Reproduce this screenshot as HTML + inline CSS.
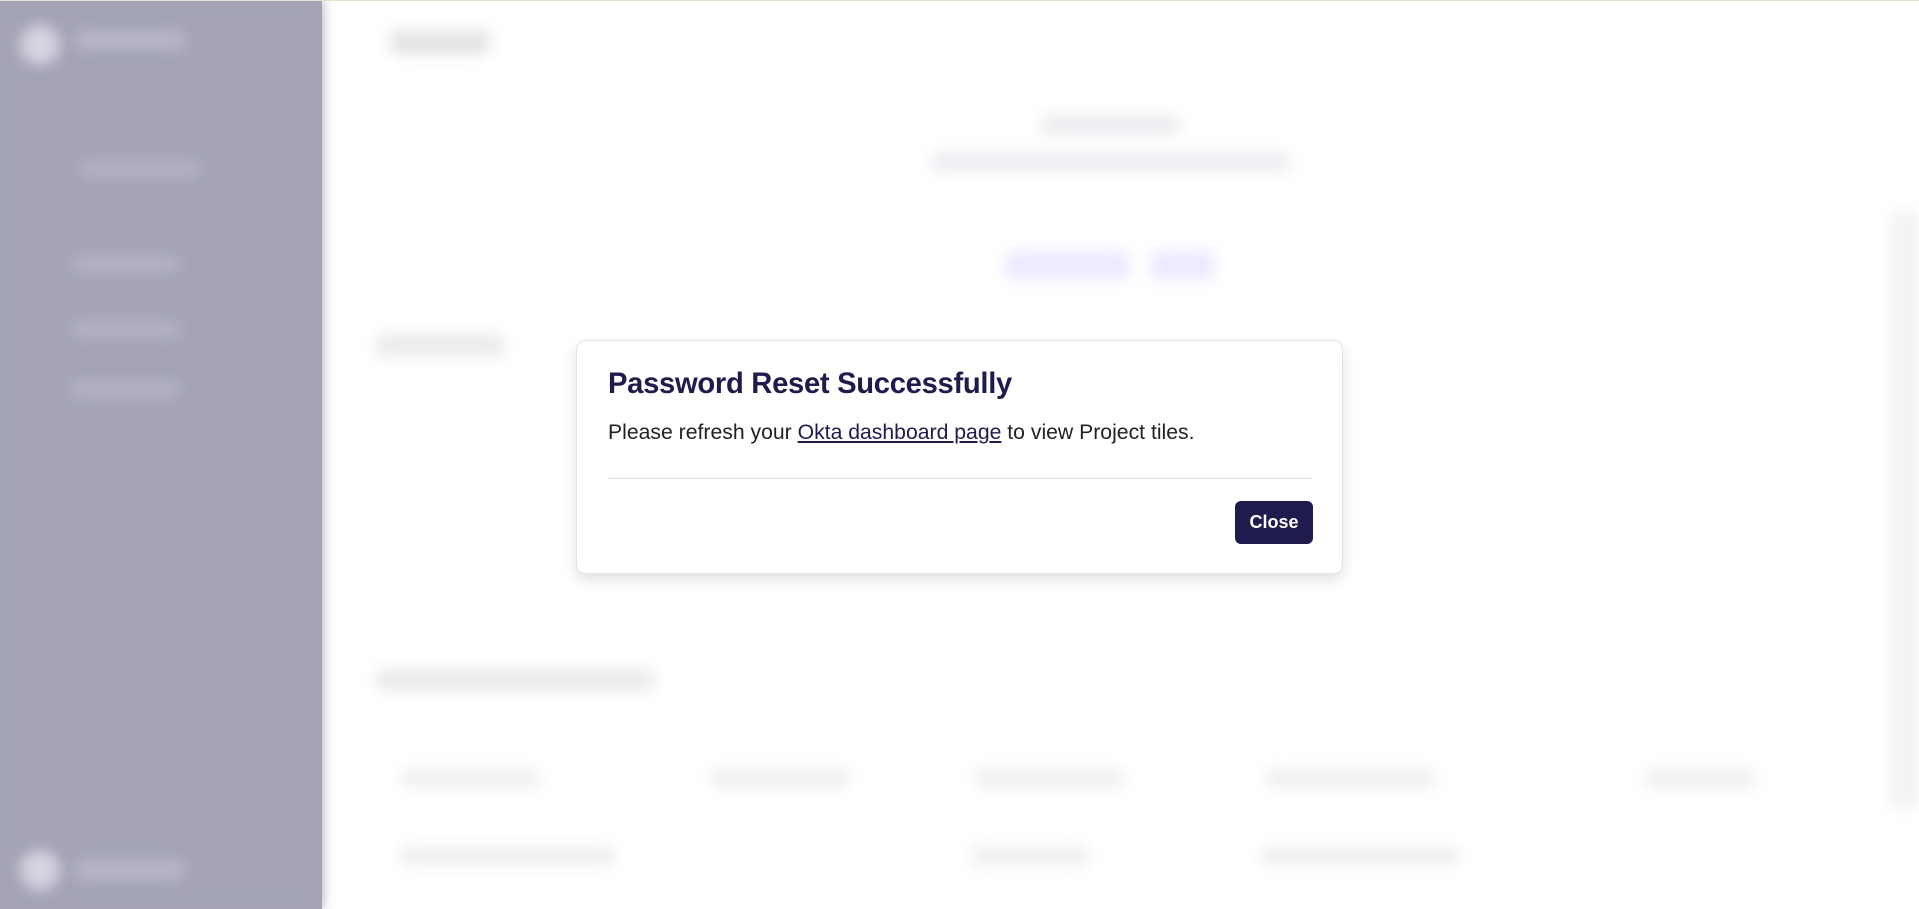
<!DOCTYPE html>
<html><head><meta charset="utf-8"><style>
*{margin:0;padding:0;box-sizing:border-box}
html,body{width:1919px;height:909px;overflow:hidden}
body{background:#fff;font-family:"Liberation Sans",sans-serif;position:relative}
.side{position:absolute;left:0;top:0;width:322px;height:909px;background:#a4a3b7;filter:blur(6px)}
.blob{position:absolute;border-radius:8px;filter:blur(7px)}
.dlg{position:absolute;left:576px;top:340px;width:767px;height:234px;background:#fff;border:1px solid #e3e3e8;border-radius:9px;box-shadow:0 6px 14px rgba(0,0,0,.12)}
h1{position:absolute;left:31px;top:27px;font-size:29.2px;font-weight:700;color:#1f1b4c;letter-spacing:-0.3px}
p{position:absolute;left:31px;top:80px;font-size:21.2px;color:#222;}
p a{color:#1f1b4c;text-decoration:underline}
.hr{position:absolute;left:31px;right:30px;top:137px;height:1px;background:#e2e2e6}
.btn{position:absolute;left:658px;top:160px;width:78px;height:43px;background:#1f1b4c;border-radius:6px;color:#fff;font-weight:700;font-size:18px;display:flex;align-items:center;justify-content:center}
</style></head><body>
<div style="position:absolute;left:0;top:0;width:322px;height:909px;background:#a4a3b7"></div>
<div class="side"></div>
<div style="position:absolute;left:0;top:0;width:1919px;height:1px;background:#dfe3d0"></div>
<div class="blob" style="left:20px;top:25px;width:40px;height:40px;border-radius:50%;background:#d6d5e0"></div>
<div class="blob" style="left:75px;top:30px;width:110px;height:20px;background:#b8b7c8"></div>
<div class="blob" style="left:80px;top:160px;width:120px;height:18px;background:#b3b2c4"></div>
<div class="blob" style="left:70px;top:255px;width:110px;height:18px;background:#b3b2c4"></div>
<div class="blob" style="left:70px;top:320px;width:110px;height:18px;background:#b3b2c4"></div>
<div class="blob" style="left:70px;top:380px;width:110px;height:18px;background:#b3b2c4"></div>
<div class="blob" style="left:20px;top:850px;width:40px;height:40px;border-radius:50%;background:#d6d5e0"></div>
<div class="blob" style="left:75px;top:860px;width:110px;height:20px;background:#b8b7c8"></div>
<div class="blob" style="left:390px;top:30px;width:100px;height:25px;background:#e4e4e6"></div>
<div class="blob" style="left:1040px;top:115px;width:140px;height:20px;background:#ececf0"></div>
<div class="blob" style="left:930px;top:152px;width:360px;height:20px;background:#ededf2"></div>
<div class="blob" style="left:1005px;top:250px;width:125px;height:30px;background:#eee9ff"></div>
<div class="blob" style="left:1150px;top:250px;width:65px;height:30px;background:#eee9ff"></div>
<div class="blob" style="left:375px;top:333px;width:130px;height:24px;background:#ececee"></div>
<div class="blob" style="left:375px;top:668px;width:280px;height:24px;background:#ececee"></div>
<div class="blob" style="left:400px;top:768px;width:140px;height:20px;background:#f0f0f2"></div>
<div class="blob" style="left:400px;top:846px;width:215px;height:20px;background:#eeeef0"></div>
<div class="blob" style="left:710px;top:768px;width:140px;height:20px;background:#f0f0f2"></div>
<div class="blob" style="left:975px;top:768px;width:150px;height:20px;background:#f0f0f2"></div>
<div class="blob" style="left:1265px;top:768px;width:170px;height:20px;background:#f0f0f2"></div>
<div class="blob" style="left:1645px;top:768px;width:110px;height:20px;background:#f0f0f2"></div>
<div class="blob" style="left:970px;top:846px;width:120px;height:20px;background:#f0f0f2"></div>
<div class="blob" style="left:1260px;top:846px;width:200px;height:20px;background:#f0f0f2"></div>
<div class="blob" style="left:1890px;top:210px;width:29px;height:600px;background:#f3f3f5"></div>
<div class="dlg">
<h1>Password Reset Successfully</h1>
<p>Please refresh your <a>Okta dashboard page</a> to view Project tiles.</p>
<div class="hr"></div>
<div class="btn">Close</div>
</div>
</body></html>
